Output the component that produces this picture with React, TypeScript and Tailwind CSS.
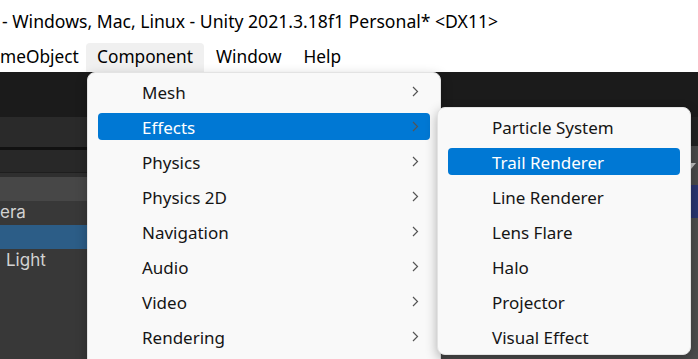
import React from 'react';

const font = { fontFamily: '"Noto Sans", "Open Sans", sans-serif' };

const Chevron = () => (
  <svg width="7" height="11" viewBox="0 0 7 11" fill="none">
    <path d="M1 1l4.5 4.5L1 10" stroke="#555555" strokeWidth="1.2" />
  </svg>
);

const mainItems = ['Mesh', 'Effects', 'Physics', 'Physics 2D', 'Navigation', 'Audio', 'Video', 'Rendering'];
const effectItems = ['Particle System', 'Trail Renderer', 'Line Renderer', 'Lens Flare', 'Halo', 'Projector', 'Visual Effect'];

const MenuRow = ({ label, active, arrow }: { label: string; active?: boolean; arrow?: boolean }) => (
  <div
    className={`h-[27px] shrink-0 flex items-center pl-[44px] pr-[11px] rounded-[4px] text-[17px] ${
      active ? 'bg-[#0078d4] text-white' : 'text-[#151515]'
    }`}
  >
    <span className="flex-1 pt-[3px] whitespace-nowrap">{label}</span>
    {arrow && <Chevron />}
  </div>
);

export default function App() {
  return (
    <div className="relative w-[698px] h-[359px] overflow-hidden bg-white flex flex-col" style={font}>
      {/* title bar */}
      <div className="h-[42px] shrink-0 flex items-center pl-[2px] text-[17.6px] text-black whitespace-nowrap">
        - Windows, Mac, Linux - Unity 2021.3.18f1 Personal* &lt;DX11&gt;
      </div>

      {/* menu bar */}
      <div className="h-[30px] shrink-0 flex items-center text-[17.3px] text-black whitespace-nowrap">
        <div className="w-[80px] shrink-0">meObject</div>
        <div className="ml-[6px] h-[29px] px-[11px] flex items-center bg-[#f0f0f0] rounded-t-[4px]">Component</div>
        <div className="ml-[12px]">Window</div>
        <div className="ml-[22px]">Help</div>
      </div>

      {/* editor */}
      <div className="flex-1 flex flex-col bg-[#1b1b1b]">
        <div className="h-[45px] shrink-0" />
        <div className="flex-1 flex">
          <div className="w-[300px] flex flex-col" style={{ fontFamily: 'Inter, sans-serif' }}>
            <div className="h-[30px] bg-[#2a2a2a]" />
            <div className="h-[3px] bg-[#111111]" />
            <div className="h-[22px] bg-[#282828]" />
            <div className="h-[1px] bg-[#1e1e1e]" />
            <div className="h-[4px] bg-[#2f2f2f]" />
            <div className="h-[24px] bg-[#474747]" />
            <div className="flex-1 bg-[#383838] text-[17px] text-[#d2d2d2] whitespace-nowrap">
              <div className="h-[24px] flex items-center">era</div>
              <div className="h-[24px] bg-[#2c5d87]" />
              <div className="h-[24px] flex items-center pl-[6px]">Light</div>
            </div>
          </div>
          <div className="flex-1 flex flex-col">
            <div className="h-[29px] bg-[#222222]" />
            <div className="h-[39px] bg-[#4a4a4a] flex items-center justify-end pr-[2px]">
              <svg width="10" height="6" viewBox="0 0 10 6">
                <path d="M0 0h10L5 6z" fill="#c4c4c4" />
              </svg>
            </div>
            <div className="h-[33px] bg-[#2a3570]" />
            <div className="flex-1 bg-[#4d4d4d]" />
          </div>
        </div>
      </div>

      {/* Component menu */}
      <div className="absolute left-[87px] top-[72px] w-[354px] h-[300px] bg-[#f9f9f9] rounded-[8px] border border-[#e3e3e3] shadow-[0_4px_12px_rgba(0,0,0,0.25)] flex flex-col gap-[8px] pt-[5px] px-[10px]">
        {mainItems.map((m) => (
          <MenuRow key={m} label={m} active={m === 'Effects'} arrow />
        ))}
      </div>

      {/* Effects submenu */}
      <div className="absolute left-[437px] top-[107px] w-[254px] h-[248px] bg-[#f9f9f9] rounded-[8px] border border-[#e3e3e3] shadow-[0_4px_12px_rgba(0,0,0,0.3)] flex flex-col gap-[8px] pt-[5px] px-[10px]">
        {effectItems.map((m) => (
          <MenuRow key={m} label={m} active={m === 'Trail Renderer'} />
        ))}
      </div>
    </div>
  );
}
